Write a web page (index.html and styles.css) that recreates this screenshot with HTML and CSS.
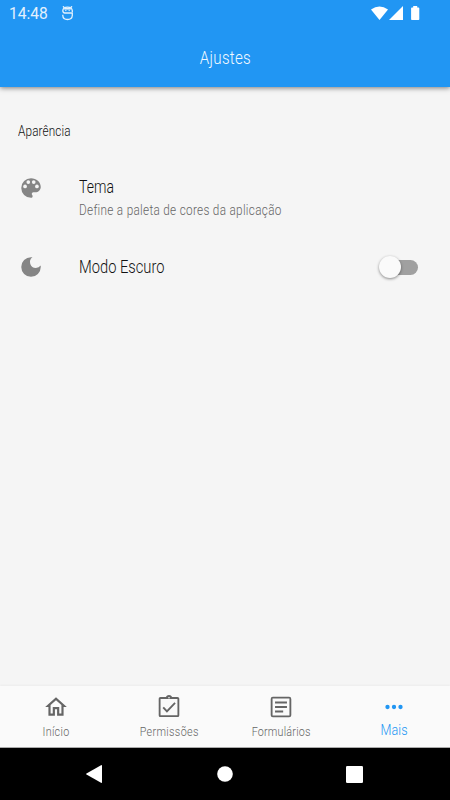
FILE: index.html
```html
<!DOCTYPE html>
<html lang="pt">
<head>
<meta charset="utf-8">
<title>Ajustes</title>
<link rel="stylesheet" href="styles.css">
</head>
<body>
<header class="top">
  <div class="status">
    <span class="clock">14:48</span>
    <svg class="debug" width="12" height="15" viewBox="0 0 12 15" fill="none" stroke="#e3f1fd" stroke-width="1.300"><path d="M10.300 6V4.600Q9.800 1.200 5.500 1.200T.8 4.600Q.8 7 2.800 7H10.300V9.500Q10 13.500 5.500 13.500T.8 9.500V8.800"/><path d="M1 .3l1.400 1.500M10 .3L8.600 1.800"/><path d="M2.200 2.700h6.600" stroke-width="1.800"/><path d="M3.200 4.600h1.200M6.600 4.600h1.200" stroke-width="1"/></svg>
    <svg class="signals" width="50" height="16" viewBox="0 0 50 16" fill="#fff"><path d="M0 3.400Q8.500-2.400 17 3.400L8.500 14Z"/><path d="M32 0V14H18Z"/><path d="M42.200 0h4v1.500h1.300q.8 0 .8.800v11q0 .8-.8.800h-6.600q-.8 0-.8-.8v-11q0-.8.800-.8h1.300Z"/></svg>
  </div>
  <h1 class="title"><span class="fit fit-title">Ajustes</span></h1>
</header>
<main class="content">
  <h2 class="section"><span class="fit fit-section">Aparência</span></h2>
  <div class="row row-theme">
    <svg class="row-icon" width="26" height="26" viewBox="0 0 24 24"><path fill="#858585" d="M12 3a9 9 0 0 0 0 18c.83 0 1.500-.67 1.500-1.500 0-.39-.15-.74-.39-1.010-.23-.26-.38-.61-.38-.99 0-.83.67-1.500 1.500-1.500H16c2.760 0 5-2.240 5-5 0-4.420-4.030-8-9-8z"/><g fill="#f5f5f5"><circle cx="6.500" cy="10.500" r="1.700"/><circle cx="9.500" cy="6.500" r="1.700"/><circle cx="14.500" cy="6.500" r="1.700"/><circle cx="17.500" cy="10.500" r="1.700"/></g></svg>
    <div class="row-text">
      <div class="name"><span class="fit fit-tema">Tema</span></div>
      <div class="desc"><span class="fit fit-desc">Define a paleta de cores da aplicação</span></div>
    </div>
  </div>
  <div class="row row-dark">
    <svg class="row-icon" width="26" height="26" viewBox="0 0 24 24"><path fill="#858585" d="M12 3a9 9 0 1 0 9 9c0-.46-.04-.92-.1-1.360a5.389 5.389 0 0 1-4.400 2.260 5.403 5.403 0 0 1-3.140-9.800C12.920 3.040 12.460 3 12 3z"/></svg>
    <div class="name"><span class="fit fit-dark">Modo Escuro</span></div>
    <div class="switch"><div class="knob"></div></div>
  </div>
</main>
<nav class="tabs">
  <div class="tab">
    <svg width="26" height="26" viewBox="0 0 24 24" fill="#656565"><path d="M12 5.690l5 4.500V18h-2v-6H9v6H7v-7.810l5-4.500M12 3L2 12h3v8h6v-6h2v6h6v-8h3L12 3z"/></svg>
    <div class="label"><span class="fit fit-inicio">Início</span></div>
  </div>
  <div class="tab">
    <svg width="26" height="26" viewBox="0 0 24 24" fill="#656565"><path d="M19.800 2.800h-4.980C14.400 1.740 13.300 1 12 1s-2.400.74-2.820 1.800H4.200C3.100 2.800 2.500 3.500 2.500 4.500v15c0 1.100.7 1.800 1.800 1.800h15.400c1.100 0 1.800-.7 1.800-1.800v-15c0-1-.7-1.700-1.700-1.700zm-7.800-.05a.75.75 0 1 1 0 1.500.75.75 0 0 1 0-1.500zM19.800 19.600H4.200V4.500h15.600v15.100zM18.200 8.700l-1.200-1.200-6.900 7.200-2.800-3-1.300 1.200 4.100 4.400z" fill-rule="evenodd"/></svg>
    <div class="label"><span class="fit fit-perm">Permissões</span></div>
  </div>
  <div class="tab">
    <svg width="26" height="26" viewBox="0 0 24 24" fill="#656565"><path fill-rule="evenodd" d="M4.500 2.500h15q2 0 2 2v15q0 2-2 2h-15q-2 0-2-2v-15q0-2 2-2zM4.200 4.200v15.600h15.600V4.200zM6.500 7h11v1.800H6.500zM6.500 11.100h11v1.800H6.500zM6.500 15.200H14V17H6.500z"/></svg>
    <div class="label"><span class="fit fit-form">Formulários</span></div>
  </div>
  <div class="tab tab-active">
    <svg width="26" height="26" viewBox="0 0 24 24" fill="#2196f3"><circle cx="6" cy="12" r="2"/><circle cx="12" cy="12" r="2"/><circle cx="18" cy="12" r="2"/></svg>
    <div class="label"><span class="fit fit-mais">Mais</span></div>
  </div>
</nav>
<footer class="system">
  <svg width="17" height="20" viewBox="0 0 17 20" fill="#fff"><path d="M15 1.200Q16 .8 16 1.800V18.200Q16 19.200 15 18.800L.5 10.500Q-.3 10 .5 9.500Z"/></svg>
  <svg width="16" height="16" viewBox="0 0 16 16"><circle cx="8" cy="8" r="7.800" fill="#fff"/></svg>
  <svg width="17" height="17" viewBox="0 0 17 17"><rect width="17" height="17" rx="1.300" fill="#fff"/></svg>
</footer>
</body>
</html>
```
FILE: styles.css
```css
* { box-sizing: border-box; }
body {
  margin: 0;
  width: 450px;
  height: 800px;
  display: flex;
  flex-direction: column;
  overflow: hidden;
  background: #f5f5f5;
  color: #111;
  font-family: Roboto, "Liberation Sans", sans-serif;
  font-weight: 300;
}
h1, h2 { margin: 0; font-weight: 300; }
.top {
  height: 87px;
  background: #2196f3;
  box-shadow: 0 1px 5px rgba(0, 0, 0, .5);
}
.status {
  height: 28px;
  display: flex;
  align-items: flex-start;
  padding: 6px 29px 0 9px;
}
.clock { font-size: 15.600px; line-height: 16px; font-weight: 400; color: #e3f1fd; width: 53px; }
.signals { margin-left: auto; }
.title {
  height: 59px;
  display: flex;
  align-items: center;
  justify-content: center;
  font-size: 18px;
  color: #f2f9ff;
}
.fit { display: inline-block; white-space: nowrap; transform: scaleX(.84); transform-origin: left center; }
.title .fit, .label .fit { transform-origin: center; }
.fit-title { letter-spacing: .33px; }
.fit-section { letter-spacing: .15px; }
.fit-tema { letter-spacing: .1px; transform: scaleX(.8); }
.fit-desc { letter-spacing: .36px; }
.fit-dark { letter-spacing: 0; }
.fit-inicio { letter-spacing: .35px; }
.fit-perm { letter-spacing: .42px; }
.fit-form { letter-spacing: .26px; }
.fit-mais { letter-spacing: .05px; }
.content { flex: 1; padding-top: 34px; }
.section { font-size: 14px; line-height: 20px; padding-left: 17.500px; }
.row { display: flex; padding: 0 32px 0 18px; }
.row-icon { width: 26px; margin-right: 35px; flex: none; }
.row-theme { margin-top: 34px; height: 64px; }
.row-dark { height: 30px; margin-top: 13px; align-items: center; }
.name { font-size: 17.500px; line-height: 24px; }
.desc { font-size: 14px; line-height: 22px; color: #666; }
.switch {
  margin-left: auto;
  width: 35px;
  height: 15px;
  border-radius: 8px;
  background: #a0a0a0;
}
.knob {
  width: 22px;
  height: 22px;
  margin: -4px 0 0 -4px;
  border-radius: 50%;
  background: #fafafa;
  box-shadow: 0 1px 3px rgba(0, 0, 0, .45);
}
.tabs {
  height: 62px;
  display: flex;
  background: #fafafa;
  box-shadow: 0 -1px 2px rgba(0, 0, 0, .04);
  border-bottom: 1px solid #aaa;
}
.tab { flex: 1; padding-top: 8px; text-align: center; color: #656565; }
.tab svg { display: block; margin: 0 auto; }
.label { font-size: 12.800px; line-height: 24px; }
.tab-active { color: #2196f3; }
.tab-active .label { font-size: 15px; line-height: 21px; }
.system {
  height: 52px;
  display: flex;
  align-items: center;
  justify-content: space-between;
  padding: 0 87px 0 86px;
  background: #000;
}
```
